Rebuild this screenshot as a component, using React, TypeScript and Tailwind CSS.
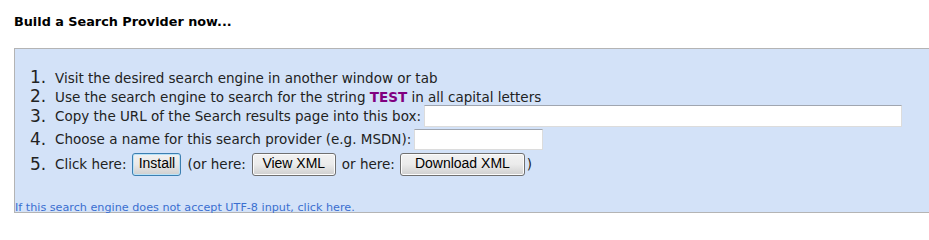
import React from 'react';

// ── Small pieces ───────────────────────────────────────────────────────────

const Num = ({ n }: { n: number }) => (
  <span className="inline-block w-[25px] text-[17px] leading-[17px] text-[#222]">{n}.</span>
);

const Btn = ({ label, w, primary = false }: { label: string; w: string; primary?: boolean }) => (
  <button
    type="button"
    className={
      primary
        ? `${w} h-[23px] pb-[3px] rounded-[3px] border border-[#3c7fb1] bg-gradient-to-b from-[#f2f2f2] via-[#e8e8e8] to-[#cfcfcf] text-[14px] leading-none text-black shadow-[inset_0_0_0_1px_#b8e2f8] font-['Liberation_Sans',Arial,sans-serif]`
        : `${w} h-[23px] pb-[3px] rounded-[3px] border border-[#707070] bg-gradient-to-b from-[#f2f2f2] via-[#ebebeb] to-[#cfcfcf] text-[14px] leading-none text-black shadow-[inset_0_0_0_1px_#fcfcfc] font-['Liberation_Sans',Arial,sans-serif]`
    }
  >
    {label}
  </button>
);

// ── Main Component ─────────────────────────────────────────────────────────

export default function App() {
  return (
    <div className="w-[929px] h-[227px] bg-white overflow-hidden font-['DejaVu_Sans',Verdana,sans-serif] text-[13.5px] text-[#222]">
      {/* Heading */}
      <h2 className="pl-[14px] pt-[14px] text-[12.8px] font-bold leading-[15px] text-black">
        Build a Search Provider now...
      </h2>

      {/* Panel */}
      <div className="mt-[19px] ml-[14px] w-[930px] h-[165px] border border-r-0 border-[#b4b4b4] bg-[#d3e2f8]">
        <ol className="pl-[15px] pt-[19px]">
          <li className="flex items-baseline h-[19px]">
            <Num n={1} />
            <span>Visit the desired search engine in another window or tab</span>
          </li>
          <li className="flex items-baseline h-[17px]">
            <Num n={2} />
            <span>
              Use the search engine to search for the string{' '}
              <b className="text-[#800080]">TEST</b> in all capital letters
            </span>
          </li>
          <li className="flex items-center h-[22px] mt-[1px]">
            <Num n={3} />
            <span>Copy the URL of the Search results page into this box:</span>
            <input
              type="text"
              className="ml-[3px] w-[478px] h-[22px] bg-white border border-[#dcdcdc] border-t-[#a0a6b0] outline-none"
            />
          </li>
          <li className="flex items-center h-[22px] mt-[1px]">
            <Num n={4} />
            <span>Choose a name for this search provider (e.g. MSDN):</span>
            <input
              type="text"
              className="ml-[3px] w-[129px] h-[21px] bg-white border border-[#dcdcdc] border-t-[#a0a6b0] outline-none"
            />
          </li>
          <li className="flex items-center h-[23px] mt-[3px]">
            <Num n={5} />
            <span className="mr-[6px]">Click here:</span>
            <Btn label="Install" w="w-[49px]" primary />
            <span className="ml-[6px] mr-[6px]">(or here:</span>
            <Btn label="View XML" w="w-[84px]" />
            <span className="ml-[6px] mr-[5px]">or here:</span>
            <Btn label="Download XML" w="w-[125px]" />
            <span className="ml-[2px]">)</span>
          </li>
        </ol>

        {/* Footer link */}
        <a className="block mt-[26px] text-[11.2px] leading-[12px] text-[#3a6fd0] cursor-pointer">
          If this search engine does not accept UTF-8 input, click here.
        </a>
      </div>
    </div>
  );
}
